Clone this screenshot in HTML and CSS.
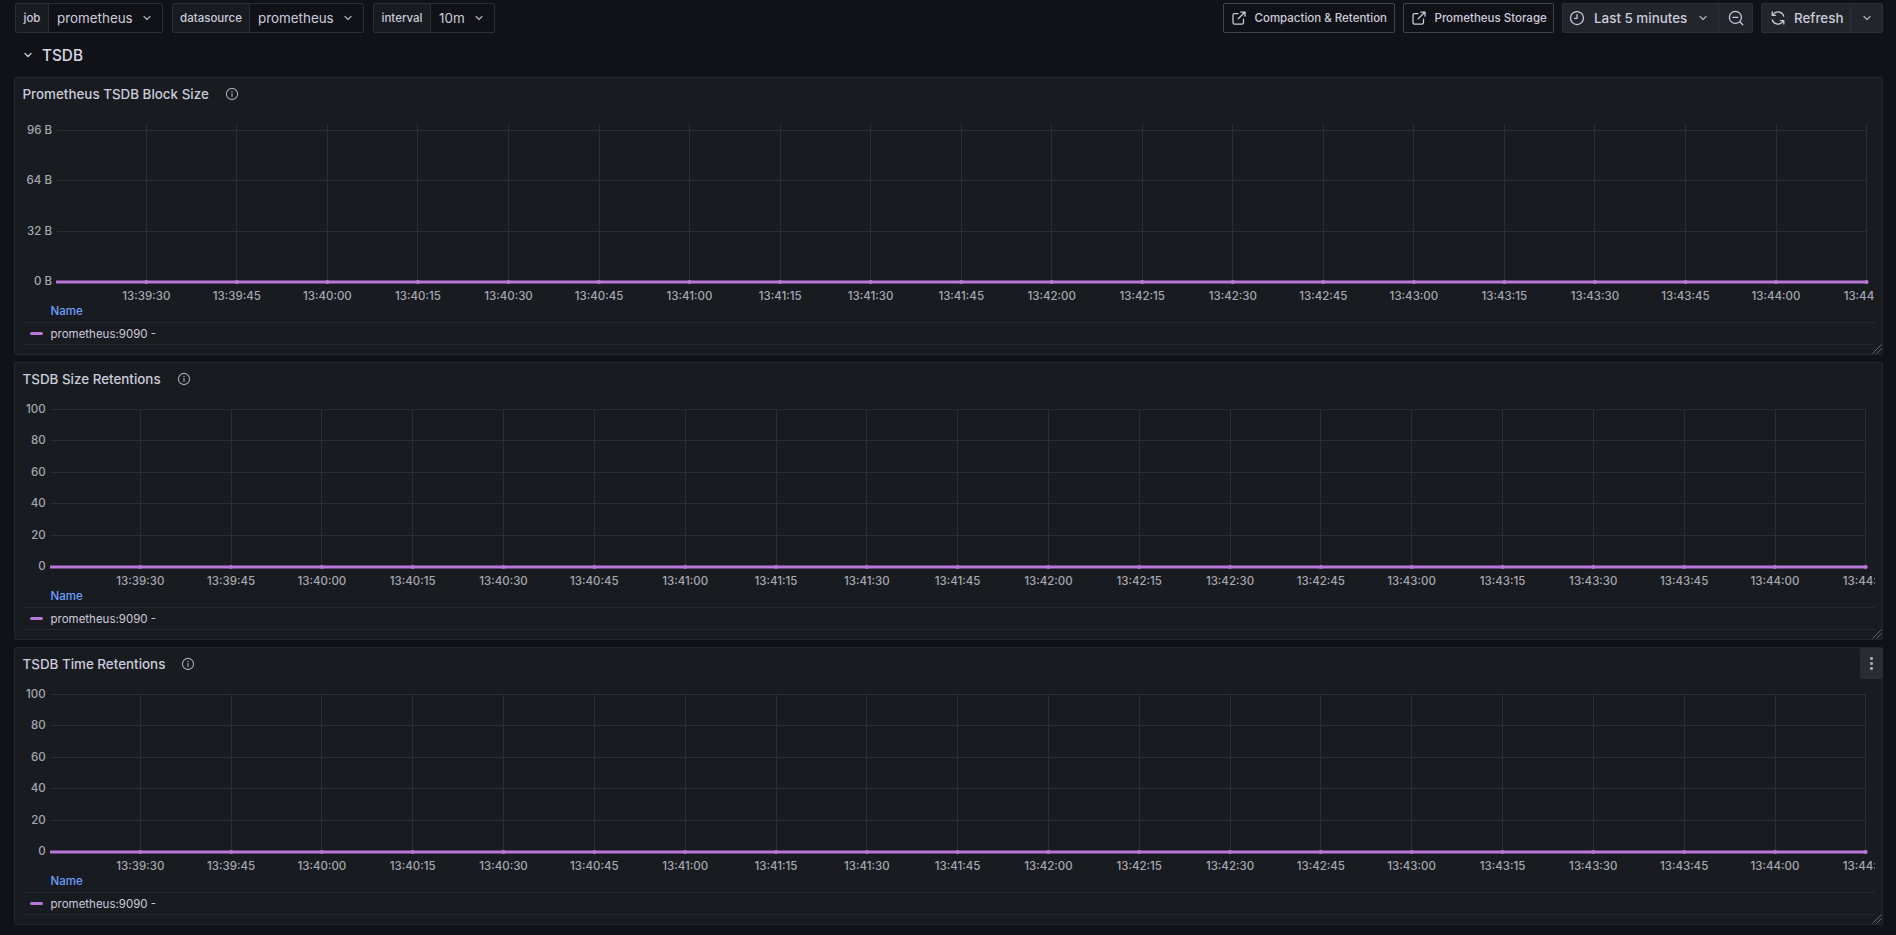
FILE: index.html
```html
<!DOCTYPE html>
<html lang="en">
<head>
<meta charset="utf-8">
<title>Prometheus / TSDB</title>
<link rel="stylesheet" href="styles.css">
</head>
<body>
<svg class="defs" width="0" height="0" aria-hidden="true">
  <defs>
    <symbol id="i-chev" viewBox="0 0 16 16"><path d="M5 6.5 8 9.5 11 6.5" fill="none" stroke="currentColor" stroke-width="1.3" stroke-linecap="round" stroke-linejoin="round"/></symbol>
    <symbol id="i-info" viewBox="0 0 14 14"><circle cx="7" cy="7" r="5.6" fill="none" stroke="currentColor" stroke-width="1.1"/><path d="M7 6.4v3.2" stroke="currentColor" stroke-width="1.1" stroke-linecap="round"/><circle cx="7" cy="4.5" r=".7" fill="currentColor"/></symbol>
    <symbol id="i-ext" viewBox="0 0 16 16"><path d="M7 3.5H3.6A1.6 1.6 0 0 0 2 5.1v7.3A1.6 1.6 0 0 0 3.6 14h7.3a1.6 1.6 0 0 0 1.6-1.6V9M9.8 2H14v4.2M14 2 7.2 8.8" fill="none" stroke="currentColor" stroke-width="1.25" stroke-linecap="round" stroke-linejoin="round"/></symbol>
    <symbol id="i-clock" viewBox="0 0 16 16"><circle cx="8" cy="8" r="6.5" fill="none" stroke="currentColor" stroke-width="1.25"/><path d="M8 4.5V8.3H5.6" fill="none" stroke="currentColor" stroke-width="1.25" stroke-linecap="round" stroke-linejoin="round"/></symbol>
    <symbol id="i-zoom" viewBox="0 0 16 16"><circle cx="7.4" cy="7.4" r="6" fill="none" stroke="currentColor" stroke-width="1.25"/><path d="M5 7.4h4.8M11.8 11.8 14.8 14.8" fill="none" stroke="currentColor" stroke-width="1.25" stroke-linecap="round"/></symbol>
    <symbol id="i-sync" viewBox="0 0 16 16"><path d="M13.8 6.2A6 6 0 0 0 3.6 3.9L2.2 5.3M2.2 1.9v3.4h3.4M2.2 9.8a6 6 0 0 0 10.2 2.3l1.4-1.4M13.8 14.1v-3.4h-3.4" fill="none" stroke="currentColor" stroke-width="1.25" stroke-linecap="round" stroke-linejoin="round"/></symbol>
  </defs>
</svg>

<header class="toolbar">
  <div class="var-group">
    <span class="var-label var-job">job</span>
    <span class="var-value var-wide">prometheus<svg class="chev"><use href="#i-chev"/></svg></span>
  </div>
  <div class="var-group">
    <span class="var-label var-ds">datasource</span>
    <span class="var-value var-wide">prometheus<svg class="chev"><use href="#i-chev"/></svg></span>
  </div>
  <div class="var-group">
    <span class="var-label var-int">interval</span>
    <span class="var-value var-narrow">10m<svg class="chev"><use href="#i-chev"/></svg></span>
  </div>
  <div class="toolbar-right">
    <a class="link-btn link-a"><svg class="ico"><use href="#i-ext"/></svg>Compaction &amp; Retention</a>
    <a class="link-btn link-b"><svg class="ico"><use href="#i-ext"/></svg>Prometheus Storage</a>
    <div class="btn-group picker">
      <span class="btn btn-time"><svg class="ico"><use href="#i-clock"/></svg>Last 5 minutes<svg class="chev"><use href="#i-chev"/></svg></span>
      <span class="btn btn-zoom"><svg class="ico"><use href="#i-zoom"/></svg></span>
    </div>
    <div class="btn-group">
      <span class="btn btn-refresh"><svg class="ico"><use href="#i-sync"/></svg>Refresh</span>
      <span class="btn btn-more"><svg class="chev"><use href="#i-chev"/></svg></span>
    </div>
  </div>
</header>

<div class="row-head"><svg class="chev"><use href="#i-chev"/></svg><span>TSDB</span></div>

<main class="panels">

  <section class="panel">
    <div class="panel-head"><h2>Prometheus TSDB Block Size</h2><svg class="info"><use href="#i-info"/></svg></div>
    <svg class="chart" viewBox="15 109 1860 195" width="1860" height="195">
      <path class="grid" d="M57 130.5H1867M57 180.5H1867M57 231.5H1867M146.5 124V282M236.5 124V282M327.5 124V282M417.5 124V282M508.5 124V282M599.5 124V282M689.5 124V282M780.5 124V282M870.5 124V282M961.5 124V282M1051.5 124V282M1142.5 124V282M1232.5 124V282M1323.5 124V282M1413.5 124V282M1504.5 124V282M1594.5 124V282M1685.5 124V282M1776.5 124V282M1866.5 124V282"/>
      <g class="ylab ylab-b"><text x="52" y="129.5">96 B</text><text x="52" y="180">64 B</text><text x="52" y="230.5">32 B</text><text x="52" y="281">0 B</text></g>
      <path class="series" d="M56 282H1867"/>
      <g class="dots"><circle cx="146.3" cy="282" r="2"/><circle cx="236.8" cy="282" r="2"/><circle cx="327.4" cy="282" r="2"/><circle cx="417.9" cy="282" r="2"/><circle cx="508.5" cy="282" r="2"/><circle cx="599" cy="282" r="2"/><circle cx="689.5" cy="282" r="2"/><circle cx="780.1" cy="282" r="2"/><circle cx="870.6" cy="282" r="2"/><circle cx="961.2" cy="282" r="2"/><circle cx="1051.7" cy="282" r="2"/><circle cx="1142.2" cy="282" r="2"/><circle cx="1232.8" cy="282" r="2"/><circle cx="1323.3" cy="282" r="2"/><circle cx="1413.9" cy="282" r="2"/><circle cx="1504.4" cy="282" r="2"/><circle cx="1594.9" cy="282" r="2"/><circle cx="1685.5" cy="282" r="2"/><circle cx="1776" cy="282" r="2"/><circle cx="1866.6" cy="282" r="2"/></g>
      <g class="xlab"><text x="146.3" y="295.5">13:39:30</text><text x="236.8" y="295.5">13:39:45</text><text x="327.4" y="295.5">13:40:00</text><text x="417.9" y="295.5">13:40:15</text><text x="508.5" y="295.5">13:40:30</text><text x="599" y="295.5">13:40:45</text><text x="689.5" y="295.5">13:41:00</text><text x="780.1" y="295.5">13:41:15</text><text x="870.6" y="295.5">13:41:30</text><text x="961.2" y="295.5">13:41:45</text><text x="1051.7" y="295.5">13:42:00</text><text x="1142.2" y="295.5">13:42:15</text><text x="1232.8" y="295.5">13:42:30</text><text x="1323.3" y="295.5">13:42:45</text><text x="1413.9" y="295.5">13:43:00</text><text x="1504.4" y="295.5">13:43:15</text><text x="1594.9" y="295.5">13:43:30</text><text x="1685.5" y="295.5">13:43:45</text><text x="1776" y="295.5">13:44:00</text><text x="1866.6" y="295.5">13:44:15</text></g>
    </svg>
    <div class="legend">
      <div class="legend-head">Name</div>
      <div class="legend-row"><i class="swatch"></i>prometheus:9090 -</div>
    </div>
    <svg class="resize" viewBox="0 0 10 10"><path d="M0.5 9.5 9.5 .5M4.5 9.5 9.5 4.5"/></svg>
  </section>

  <section class="panel">
    <div class="panel-head"><h2>TSDB Size Retentions</h2><svg class="info"><use href="#i-info"/></svg></div>
    <svg class="chart" viewBox="15 394 1860 195" width="1860" height="195">
      <path class="grid" d="M50 409.5H1866M50 440.5H1866M50 472.5H1866M50 503.5H1866M50 535.5H1866M140.5 409V567M231.5 409V567M321.5 409V567M412.5 409V567M503.5 409V567M594.5 409V567M685.5 409V567M776.5 409V567M866.5 409V567M957.5 409V567M1048.5 409V567M1139.5 409V567M1230.5 409V567M1320.5 409V567M1411.5 409V567M1502.5 409V567M1593.5 409V567M1684.5 409V567M1775.5 409V567M1865.5 409V567"/>
      <g class="ylab ylab-n"><text x="45.7" y="408.5">100</text><text x="45.7" y="440">80</text><text x="45.7" y="471.5">60</text><text x="45.7" y="503">40</text><text x="45.7" y="534.5">20</text><text x="45.7" y="566">0</text></g>
      <path class="series" d="M50 567H1866"/>
      <g class="dots"><circle cx="140.3" cy="567" r="2"/><circle cx="231.1" cy="567" r="2"/><circle cx="321.9" cy="567" r="2"/><circle cx="412.7" cy="567" r="2"/><circle cx="503.5" cy="567" r="2"/><circle cx="594.4" cy="567" r="2"/><circle cx="685.2" cy="567" r="2"/><circle cx="776" cy="567" r="2"/><circle cx="866.8" cy="567" r="2"/><circle cx="957.6" cy="567" r="2"/><circle cx="1048.4" cy="567" r="2"/><circle cx="1139.2" cy="567" r="2"/><circle cx="1230" cy="567" r="2"/><circle cx="1320.8" cy="567" r="2"/><circle cx="1411.6" cy="567" r="2"/><circle cx="1502.5" cy="567" r="2"/><circle cx="1593.3" cy="567" r="2"/><circle cx="1684.1" cy="567" r="2"/><circle cx="1774.9" cy="567" r="2"/><circle cx="1865.7" cy="567" r="2"/></g>
      <g class="xlab"><text x="140.3" y="580.5">13:39:30</text><text x="231.1" y="580.5">13:39:45</text><text x="321.9" y="580.5">13:40:00</text><text x="412.7" y="580.5">13:40:15</text><text x="503.5" y="580.5">13:40:30</text><text x="594.4" y="580.5">13:40:45</text><text x="685.2" y="580.5">13:41:00</text><text x="776" y="580.5">13:41:15</text><text x="866.8" y="580.5">13:41:30</text><text x="957.6" y="580.5">13:41:45</text><text x="1048.4" y="580.5">13:42:00</text><text x="1139.2" y="580.5">13:42:15</text><text x="1230" y="580.5">13:42:30</text><text x="1320.8" y="580.5">13:42:45</text><text x="1411.6" y="580.5">13:43:00</text><text x="1502.5" y="580.5">13:43:15</text><text x="1593.3" y="580.5">13:43:30</text><text x="1684.1" y="580.5">13:43:45</text><text x="1774.9" y="580.5">13:44:00</text><text x="1865.7" y="580.5">13:44:15</text></g>
    </svg>
    <div class="legend">
      <div class="legend-head">Name</div>
      <div class="legend-row"><i class="swatch"></i>prometheus:9090 -</div>
    </div>
    <svg class="resize" viewBox="0 0 10 10"><path d="M0.5 9.5 9.5 .5M4.5 9.5 9.5 4.5"/></svg>
  </section>

  <section class="panel">
    <div class="panel-head"><h2>TSDB Time Retentions</h2><svg class="info"><use href="#i-info"/></svg></div>
    <span class="panel-menu"><i></i><i></i><i></i></span>
    <svg class="chart" viewBox="15 679 1860 195" width="1860" height="195">
      <path class="grid" d="M50 694.5H1866M50 725.5H1866M50 757.5H1866M50 788.5H1866M50 820.5H1866M140.5 694V852M231.5 694V852M321.5 694V852M412.5 694V852M503.5 694V852M594.5 694V852M685.5 694V852M776.5 694V852M866.5 694V852M957.5 694V852M1048.5 694V852M1139.5 694V852M1230.5 694V852M1320.5 694V852M1411.5 694V852M1502.5 694V852M1593.5 694V852M1684.5 694V852M1775.5 694V852M1865.5 694V852"/>
      <g class="ylab ylab-n"><text x="45.7" y="693.5">100</text><text x="45.7" y="725">80</text><text x="45.7" y="756.5">60</text><text x="45.7" y="788">40</text><text x="45.7" y="819.5">20</text><text x="45.7" y="851">0</text></g>
      <path class="series" d="M50 852H1866"/>
      <g class="dots"><circle cx="140.3" cy="852" r="2"/><circle cx="231.1" cy="852" r="2"/><circle cx="321.9" cy="852" r="2"/><circle cx="412.7" cy="852" r="2"/><circle cx="503.5" cy="852" r="2"/><circle cx="594.4" cy="852" r="2"/><circle cx="685.2" cy="852" r="2"/><circle cx="776" cy="852" r="2"/><circle cx="866.8" cy="852" r="2"/><circle cx="957.6" cy="852" r="2"/><circle cx="1048.4" cy="852" r="2"/><circle cx="1139.2" cy="852" r="2"/><circle cx="1230" cy="852" r="2"/><circle cx="1320.8" cy="852" r="2"/><circle cx="1411.6" cy="852" r="2"/><circle cx="1502.5" cy="852" r="2"/><circle cx="1593.3" cy="852" r="2"/><circle cx="1684.1" cy="852" r="2"/><circle cx="1774.9" cy="852" r="2"/><circle cx="1865.7" cy="852" r="2"/></g>
      <g class="xlab"><text x="140.3" y="865.5">13:39:30</text><text x="231.1" y="865.5">13:39:45</text><text x="321.9" y="865.5">13:40:00</text><text x="412.7" y="865.5">13:40:15</text><text x="503.5" y="865.5">13:40:30</text><text x="594.4" y="865.5">13:40:45</text><text x="685.2" y="865.5">13:41:00</text><text x="776" y="865.5">13:41:15</text><text x="866.8" y="865.5">13:41:30</text><text x="957.6" y="865.5">13:41:45</text><text x="1048.4" y="865.5">13:42:00</text><text x="1139.2" y="865.5">13:42:15</text><text x="1230" y="865.5">13:42:30</text><text x="1320.8" y="865.5">13:42:45</text><text x="1411.6" y="865.5">13:43:00</text><text x="1502.5" y="865.5">13:43:15</text><text x="1593.3" y="865.5">13:43:30</text><text x="1684.1" y="865.5">13:43:45</text><text x="1774.9" y="865.5">13:44:00</text><text x="1865.7" y="865.5">13:44:15</text></g>
    </svg>
    <div class="legend">
      <div class="legend-head">Name</div>
      <div class="legend-row"><i class="swatch"></i>prometheus:9090 -</div>
    </div>
    <svg class="resize" viewBox="0 0 10 10"><path d="M0.5 9.5 9.5 .5M4.5 9.5 9.5 4.5"/></svg>
  </section>

</main>
</body>
</html>
```
FILE: styles.css
```css
* { box-sizing: border-box; }

html, body {
  margin: 0;
  height: 100%;
  overflow: hidden;
}

body {
  background: #111217;
  color: #ccccdc;
  font-family: Inter, "Liberation Sans", sans-serif;
  font-size: 13.4px;
}

.defs { position: absolute; }

/* toolbar */
.toolbar {
  display: flex;
  align-items: stretch;
  height: 33px;
  padding: 3px 13px 0 15px;
}

.var-group {
  display: flex;
  margin-right: 9px;
  border: 1px solid #2c2e33;
  border-radius: 2px;
}

.var-label {
  display: flex;
  align-items: center;
  justify-content: center;
  background: #181b1f;
  border-right: 1px solid #2c2e33;
  font-size: 11.5px;
  font-weight: 500;
}
.var-job { width: 33px; }
.var-ds { width: 77px; }
.var-int { width: 57px; }

.var-value {
  display: flex;
  align-items: center;
  background: #111217;
  padding-left: 8px;
  font-size: 13.4px;
}
.var-wide { width: 113px; }
.var-narrow { width: 63px; }
.var-value .chev { margin-left: auto; margin-right: 7px; }

.chev {
  width: 16px;
  height: 16px;
  flex: none;
  color: #a8a9b5;
}

.ico {
  width: 16px;
  height: 16px;
  flex: none;
  color: #ccccdc;
}

.toolbar-right {
  display: flex;
  margin-left: auto;
  gap: 8px;
}

.link-btn {
  display: flex;
  align-items: center;
  border: 1px solid #41444a;
  border-radius: 2px;
  font-size: 11.5px;
  font-weight: 500;
  padding-left: 7px;
  white-space: nowrap;
}
.link-btn .ico { margin-right: 8px; }
.link-a { width: 172px; }
.link-b { width: 151.5px; }

.btn-group {
  display: flex;
  background: #22252b;
  border: 1px solid #2c2e33;
  border-radius: 2px;
}

.btn {
  display: flex;
  align-items: center;
  font-weight: 500;
  white-space: nowrap;
}
.btn-time {
  width: 156px;
  padding-left: 6px;
  border-right: 1px solid #2c2e33;
}
.btn-time .ico { margin-right: 9px; }
.btn-time .chev { margin-left: auto; margin-right: 7px; }
.btn-zoom { width: 33px; justify-content: center; }
.btn-refresh {
  width: 89px;
  padding-left: 8px;
  border-right: 1px solid #2c2e33;
}
.btn-refresh .ico { margin-right: 8px; }
.btn-more { width: 31px; justify-content: center; }

/* row header */
.row-head {
  display: flex;
  align-items: center;
  gap: 6px;
  height: 44px;
  padding-left: 20px;
  font-size: 15.3px;
  font-weight: 500;
  color: #d8d9e3;
}
.row-head .chev { color: #ccccdc; }

/* panels */
.panels {
  display: flex;
  flex-direction: column;
  gap: 7px;
  margin: 0 13px 0 14px;
}

.panel {
  position: relative;
  height: 278px;
  background: #181b1f;
  border: 1px solid #24262b;
  border-radius: 2px;
}

.panel-head {
  display: flex;
  align-items: center;
  height: 31px;
  padding-left: 7.5px;
}

.panel-head h2 {
  margin: 0;
  font-size: 13.4px;
  font-weight: 500;
  color: #ccccdc;
}

.info {
  width: 14px;
  height: 14px;
  margin-left: 16px;
  color: #a8a9b5;
}

.panel-menu {
  position: absolute;
  top: 0;
  right: -1px;
  display: flex;
  flex-direction: column;
  align-items: center;
  justify-content: center;
  gap: 2.5px;
  width: 23px;
  height: 31px;
  background: #2a2c31;
  border-radius: 2px;
}
.panel-menu i {
  width: 2.4px;
  height: 2.4px;
  border-radius: 50%;
  background: #a8a9b5;
}

.chart { display: block; }

.grid {
  fill: none;
  stroke: #2a2d32;
  stroke-width: 1;
}

.series {
  fill: none;
  stroke: #b877d9;
  stroke-width: 2.8;
}

.dots circle { fill: #b877d9; }

.ylab text,
.xlab text {
  fill: #a6a8b1;
  font-size: 11.5px;
  font-weight: 500;
  dominant-baseline: central;
}
.ylab text { text-anchor: end; }
.xlab text { text-anchor: middle; }

.legend {
  margin: 0 7px 0 8px;
}

.legend-head {
  height: 19px;
  padding-left: 27.5px;
  border-bottom: 1px solid #26282d;
  color: #6e9fff;
  font-size: 11.5px;
  font-weight: 500;
  line-height: 15px;
}

.legend-row {
  display: flex;
  align-items: center;
  height: 22px;
  border-bottom: 1px solid #26282d;
  font-size: 11.5px;
}

.swatch {
  width: 13px;
  height: 3px;
  margin: 0 7.5px 0 7px;
  border-radius: 2px;
  background: #b877d9;
}

.resize {
  position: absolute;
  right: 0;
  bottom: 0;
  width: 10px;
  height: 10px;
}
.resize path {
  fill: none;
  stroke: #64666c;
  stroke-width: 1;
}
```
